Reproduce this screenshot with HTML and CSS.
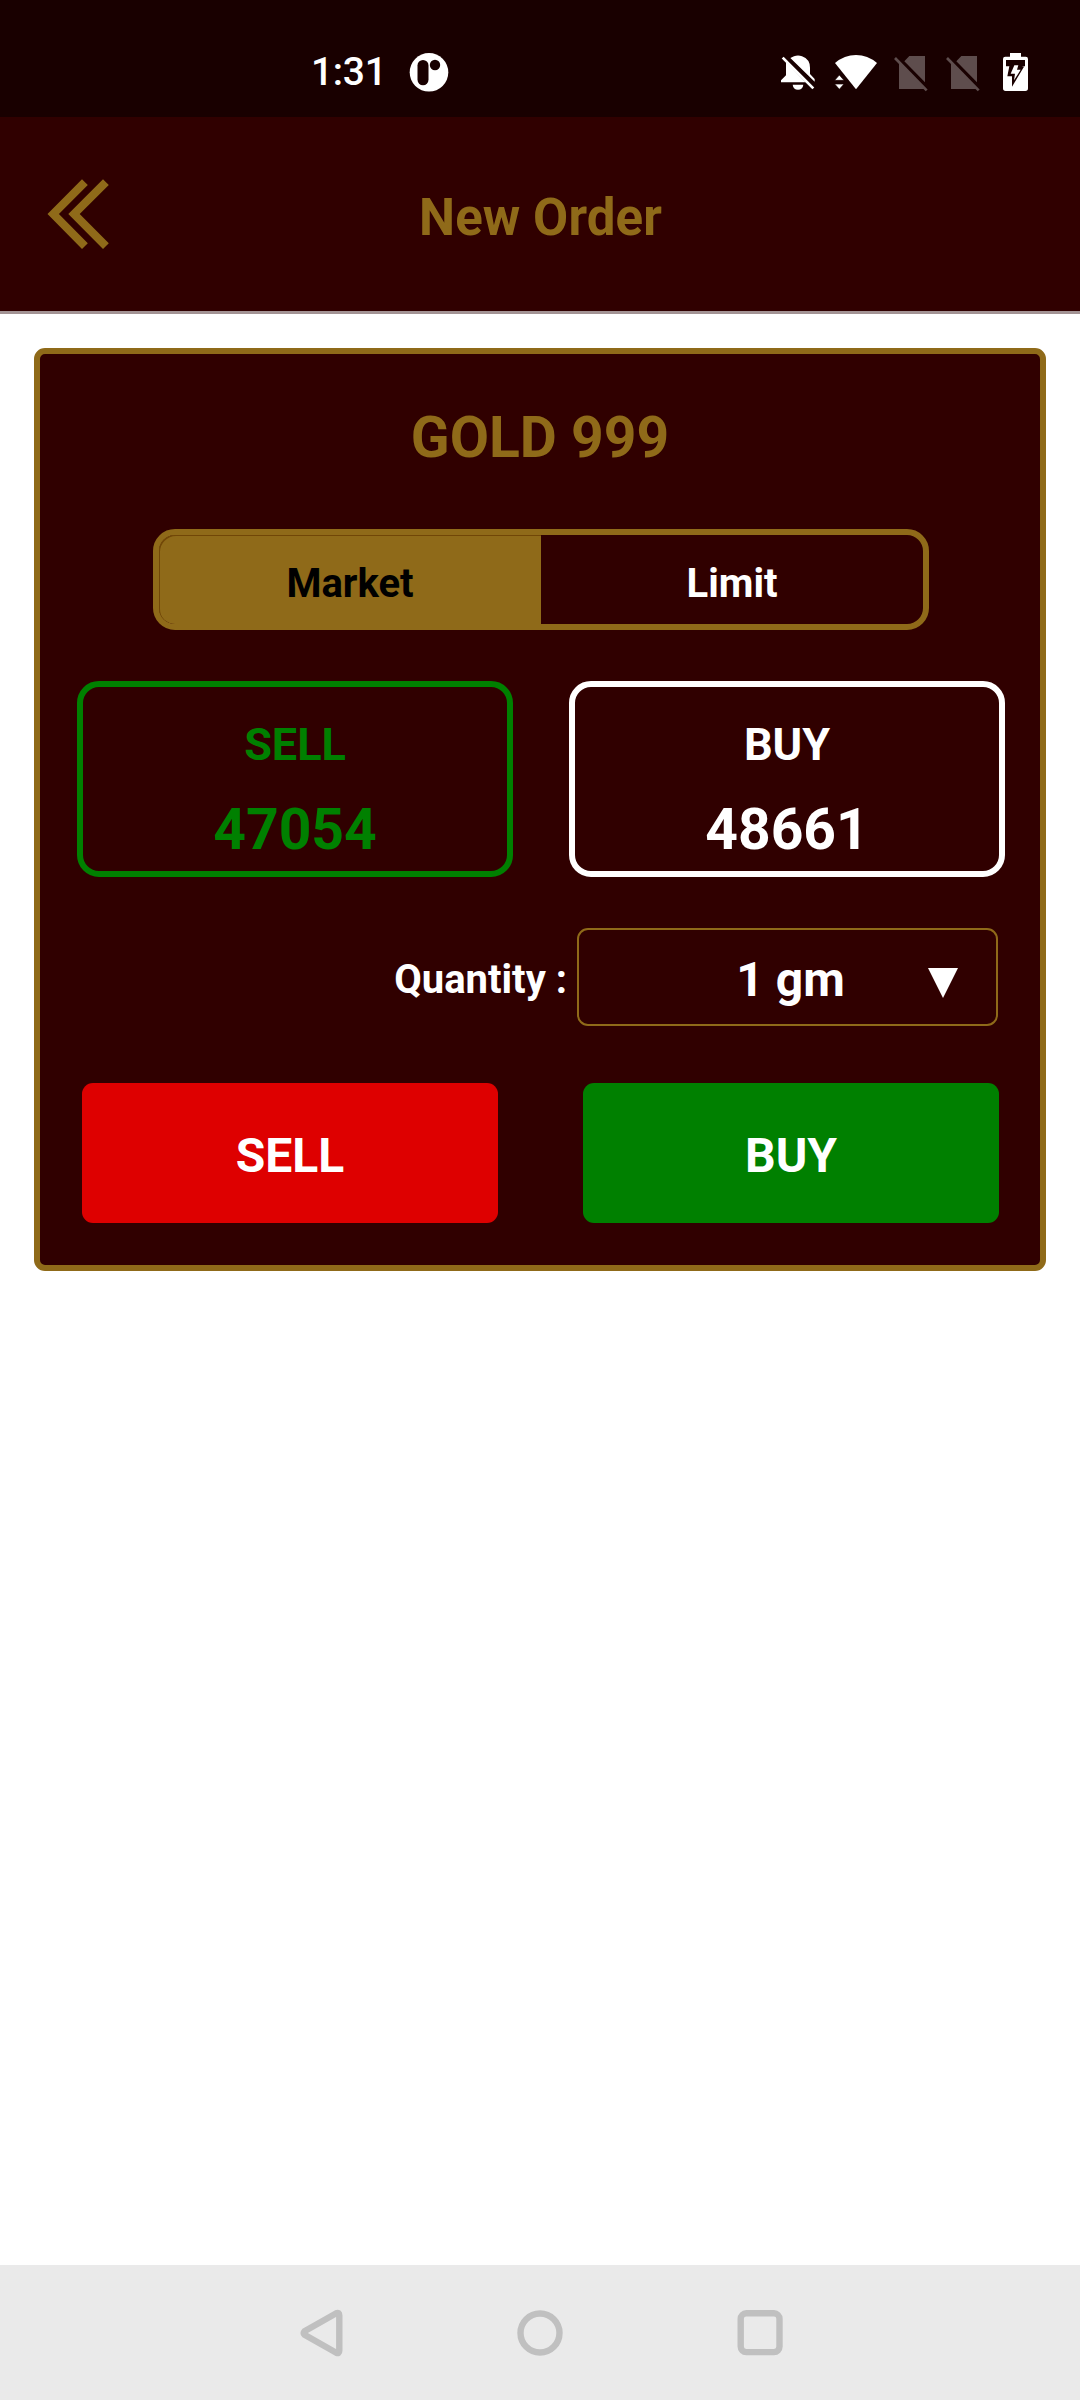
FILE: index.html
```html
<!DOCTYPE html>
<html lang="en">
<head>
<meta charset="utf-8">
<title>New Order</title>
<link rel="stylesheet" href="styles.css">
</head>
<body>
<div class="screen">
  <div class="status">
    <span class="time">1:31</span>
    <svg class="app-icon" width="40" height="40" viewBox="0 0 40 40"><circle cx="20" cy="20.3" r="19.3" fill="#fff"/><rect x="8.5" y="7.9" width="11" height="25.4" rx="5.5" fill="#190000"/><circle cx="26" cy="13" r="5.2" fill="#190000"/></svg>
    <div class="tray">
      <svg class="bell" width="36" height="40" viewBox="60 66 108 120" fill="#fff"><path d="M91 84Q98 81 102 79Q114 74 126 79Q150 88 150 113V132L164 147V155ZM78 96L137 157H63V151L78 136Z"/><path d="M98 164H130Q128 179 114 179Q100 179 98 164Z"/><path d="M68 83L160 175" stroke="#fff" stroke-width="8"/></svg>
      <svg class="wifi" width="44" height="40" viewBox="222 66 132 120" fill="#fff"><path d="M225 99Q253 75 288 75Q323 75 351 99L288 178Z"/><path d="M224 151L238 135L252 151ZM224 162H252L238 178Z" stroke="#190000" stroke-width="2"/></svg>
      <svg class="sim" width="36" height="40" viewBox="399 66 108 120" fill="#5e4d4d"><path d="M448 78H495V157L433 94ZM417 98L494 177H417Z"/><path d="M405 84L500 181" stroke="#5e4d4d" stroke-width="8"/></svg>
      <svg class="sim-two" width="36" height="40" viewBox="399 66 108 120" fill="#5e4d4d"><path d="M448 78H495V157L433 94ZM417 98L494 177H417Z"/><path d="M405 84L500 181" stroke="#5e4d4d" stroke-width="8"/></svg>
      <svg width="27" height="40" viewBox="726 66 81 120"><path d="M750 69H783V80H797Q804 80 804 87V175Q804 183 796 183H737Q729 183 729 175V87Q729 80 736 80H750Z" fill="#fff"/><path d="M738 90H795V109H785L792 110L756 170V139H742L748 109H738Z" fill="#190000"/><path d="M763 106H775L771 119H782L762 151L765 131H752Z" fill="#fff"/></svg>
    </div>
  </div>
  <header class="header">
    <svg class="back" width="64" height="72" viewBox="46 178 64 72" fill="#8f6a19"><path d="M47.5 214L82 179.3L87.8 185L58.9 214L87.8 243.2L82 249ZM68.3 214L103 179.3L108.8 185L79.7 214L108.8 243.2L103 249Z"/></svg>
    <h1 class="title">New Order</h1>
  </header>
  <main class="content">
    <section class="card">
      <h2 class="product">GOLD 999</h2>
      <div class="toggle"><div class="option active">Market</div><div class="option">Limit</div></div>
      <div class="prices">
        <div class="price sell"><span class="label">SELL</span><span class="amount">47054</span></div>
        <div class="price buy"><span class="label">BUY</span><span class="amount">48661</span></div>
      </div>
      <div class="quantity">
        <span class="quantity-label">Quantity :</span>
        <div class="select"><span class="value">1 gm</span><svg class="caret" width="30" height="30" viewBox="0 0 30 30"><path d="M0 0H30L15 30Z" fill="#fff"/></svg></div>
      </div>
      <div class="actions"><div class="button red">SELL</div><div class="button green">BUY</div></div>
    </section>
  </main>
  <nav class="nav">
    <svg width="46" height="50" viewBox="298 2308 46 50"><path d="M304.5 2331.3L336.2 2313.3Q339.3 2312 339.3 2315.5V2350.5Q339.3 2354 336.2 2352.7L304.5 2334.7Q303 2333 304.5 2331.3Z"/></svg>
    <svg width="50" height="50" viewBox="515 2308 50 50"><circle cx="540" cy="2333" r="19.5"/></svg>
    <svg width="50" height="50" viewBox="735 2308 50 50"><rect x="740.7" y="2313.3" width="38.8" height="38.8" rx="5.5"/></svg>
  </nav>
</div>
</body>
</html>
```
FILE: styles.css
```css
* { box-sizing: border-box; }
body { margin: 0; background: #fff; font-family: Roboto, sans-serif; font-weight: 700; color: #fff; }
svg { display: block; flex: none; }
.screen { width: 1080px; height: 2400px; display: flex; flex-direction: column; }
.status { height: 117px; padding: 0 51px 0 311px; display: flex; align-items: flex-start; background: #190000; }
.time { width: 98px; padding-top: 49px; font-size: 39px; line-height: 47px; font-weight: 500; letter-spacing: -0.3px; }
.app-icon { margin-top: 52px; }
.tray { display: flex; margin: 52px 0 0 auto; }
.bell { margin-right: 18px; }
.wifi { margin-right: 15px; }
.sim { margin-right: 16px; }
.sim-two { margin-right: 21px; }
.header { height: 197px; display: grid; grid-template-columns: 64px 1fr 64px; padding: 0 46px; background: #300000; border-bottom: 3px solid #a39394; }
.back { margin-top: 61px; }
.title { margin: 71px 0 0 1px; text-align: center; font-size: 51px; line-height: 60px; letter-spacing: 0.1px; color: #8f6a19; }
.content { flex: 1; padding: 34px; }
.card { height: 923px; border: 6px solid #8f6a19; border-radius: 11px; background: #300000; padding: 50px 35px 42px 37px; }
.product { margin: 0 2px 0 0; text-align: center; font-size: 57px; line-height: 68px; color: #8f6a19; }
.toggle { width: 776px; height: 101px; margin: 57px 0 0 76px; display: flex; border: 6px solid #8f6a19; border-radius: 22px; }
.option { flex: 1; display: flex; align-items: center; justify-content: center; padding-top: 7px; font-size: 40px; line-height: 47px; }
.active { color: #000; background: #8f6a19; border-radius: 16px 0 0 16px; box-shadow: inset 1px 1px 0 #714707; }
.prices { display: flex; justify-content: space-between; margin-top: 51px; }
.price { width: 436px; height: 196px; border: 6px solid; border-radius: 22px; display: flex; flex-direction: column; align-items: center; padding-top: 31px; }
.sell { color: green; }
.buy { color: #fff; }
.label { font-size: 45px; line-height: 54px; }
.amount { font-size: 57px; line-height: 68px; margin-top: 24px; }
.quantity { display: flex; justify-content: flex-end; margin: 51px 7px 0 0; }
.quantity-label { margin: 28px 10px 0 0; font-size: 40px; line-height: 47px; }
.select { width: 421px; height: 98px; border: 2px solid #8f6a19; border-radius: 11px; display: grid; grid-template-columns: 1fr 30px; padding: 0 38px 0 74px; }
.value { padding-top: 21px; text-align: center; font-size: 48px; line-height: 58px; }
.caret { margin-top: 38px; }
.actions { display: flex; justify-content: space-between; margin: 57px 6px 0 5px; }
.button { width: 416px; height: 140px; border-radius: 11px; display: flex; align-items: center; justify-content: center; padding-top: 5px; font-size: 48px; line-height: 58px; }
.red { background: #de0000; }
.green { background: green; }
.nav { height: 135px; display: flex; justify-content: space-between; padding: 43px 295px 0 298px; background: #eaeaea; fill: none; stroke: #c0c0c0; stroke-width: 6.4; }
```
